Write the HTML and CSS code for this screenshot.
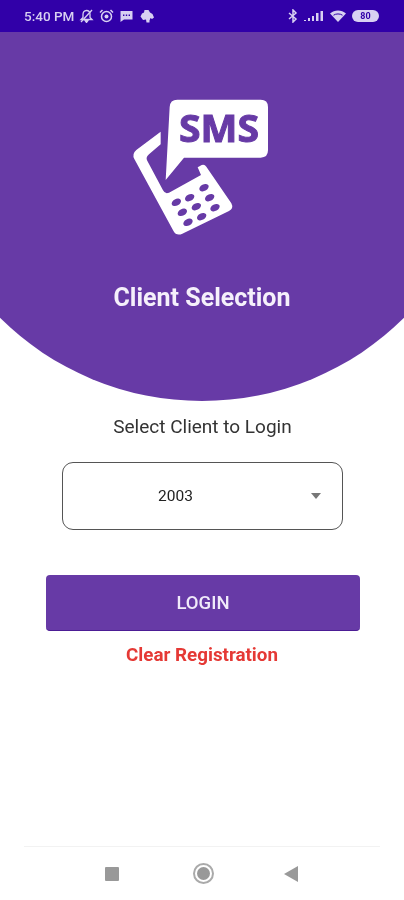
FILE: index.html
```html
<!DOCTYPE html>
<html lang="en">
<head>
    <meta charset="UTF-8">
    <meta name="viewport" content="width=device-width, initial-scale=1.0">
    <title>Client Selection</title>
    <link rel="stylesheet" href="styles.css">
</head>
<body>
    <div class="status-bar">
        <div class="status-left">
            <span class="status-time">5:40 PM</span>
            <svg class="status-icon" width="15" height="14" viewBox="0 0 15 14">
                <path d="M7.500 1.500c2.500 0 3.500 2 3.500 4v3l2 2H2l2-2v-3c0-2 1-4 3.500-4zM6 11.500h3L7.500 13.500z" fill="none" stroke="currentColor" stroke-width="1.300"/>
                <path d="M2 13L13 1" stroke="currentColor" stroke-width="1.300"/>
            </svg>
            <svg class="status-icon" width="15" height="14" viewBox="0 0 15 14">
                <circle cx="7.500" cy="7.500" r="5" fill="none" stroke="currentColor" stroke-width="1.500"/>
                <circle cx="7.500" cy="7.500" r="2" fill="currentColor"/>
                <path d="M1 3.500L3.500 1M14 3.500L11.500 1" stroke="currentColor" stroke-width="1.500"/>
            </svg>
            <svg class="status-icon" width="15" height="14" viewBox="0 0 15 14">
                <path d="M1.500 2h12v8.500H5L1.500 13z" fill="currentColor"/>
                <path d="M4 6.200h7" stroke="#3100a8" stroke-width="1.400" stroke-dasharray="1.400 1.400"/>
            </svg>
            <svg class="status-icon" width="16" height="14" viewBox="0 0 16 14">
                <path d="M5.500 1h4l1.500 2.500 2.500 1.500 1.500 3.500-2 1.500-1.500-1-1 2.500V13.500H7.500l-.5-3-3 .5L1.500 7.500 3 4.500 5 3.500z" fill="currentColor"/>
            </svg>
        </div>
        <div class="status-right">
            <svg class="status-icon" width="10" height="14" viewBox="0 0 10 14">
                <path d="M1 4l7 6-3 3V1l3 3-7 6" fill="none" stroke="currentColor" stroke-width="1.500"/>
            </svg>
            <svg class="status-icon" width="21" height="12" viewBox="0 0 21 12">
                <path d="M1 10h2v1H1zM5 8h2v3H5zM9 6h2v5H9zM13 3h2.500v8H13zM17.500 1H20v10h-2.500z" fill="currentColor"/>
            </svg>
            <svg class="status-icon" width="18" height="14" viewBox="0 0 18 14">
                <path d="M1 4.500C5.500.5 12.500.5 17 4.500L9 13z" fill="currentColor"/>
                <path d="M4.500 6.200c2.500-1.700 6.500-1.700 9 0" fill="none" stroke="#3100a8" stroke-width="1"/>
            </svg>
            <span class="battery">80</span>
        </div>
    </div>

    <div class="hero">
        <svg class="hero-icon" width="170" height="165" viewBox="0 0 510 495">
            <!-- phone body, screen is cut out of the upper half -->
            <path fill="#fff" d="M125 140L52 195Q38 207 46 222L163 437Q172 454 190 446L330 378Q345 370 337 355L262 245Q255 235 243 243L236 247L246 270L150 323Q138 328 132 316L84 226Q80 216 90 208L125 178Z"/>
            <g class="keys">
                <ellipse cx="255" cy="308" rx="15" ry="10" transform="rotate(-28 255 308)"/>
                <ellipse cx="212" cy="338" rx="15" ry="10" transform="rotate(-28 212 338)"/>
                <ellipse cx="172" cy="352" rx="15" ry="10" transform="rotate(-28 172 352)"/>
                <ellipse cx="272" cy="338" rx="15" ry="10" transform="rotate(-28 272 338)"/>
                <ellipse cx="232" cy="365" rx="15" ry="10" transform="rotate(-28 232 365)"/>
                <ellipse cx="190" cy="382" rx="15" ry="10" transform="rotate(-28 190 382)"/>
                <ellipse cx="288" cy="368" rx="15" ry="10" transform="rotate(-28 288 368)"/>
                <ellipse cx="248" cy="395" rx="15" ry="10" transform="rotate(-28 248 395)"/>
                <ellipse cx="207" cy="412" rx="15" ry="10" transform="rotate(-28 207 412)"/>
            </g>
            <!-- speech bubble -->
            <path fill="#fff" d="M175 44H425Q447 44 447 66V196Q447 218 425 218H195L140 285L152 66Q153 44 175 44Z"/>
            <text class="sms-text" x="300" y="170" textLength="240" lengthAdjust="spacingAndGlyphs">SMS</text>
        </svg>
        <h1 class="hero-title">Client Selection</h1>
    </div>

    <div class="content">
        <p class="select-label">Select Client to Login</p>
        <div class="client-select">
            <span class="client-value">2003</span>
            <span class="client-arrow"></span>
        </div>
        <button class="login-button">LOGIN</button>
        <a class="clear-link">Clear Registration</a>
    </div>

    <div class="nav-bar">
        <span class="nav-square"></span>
        <span class="nav-home"><span class="nav-home-dot"></span></span>
        <svg class="nav-back" width="14" height="16" viewBox="0 0 14 16">
            <path d="M0 8L14 0V16z" fill="#999"/>
        </svg>
    </div>
</body>
</html>
```

FILE: styles.css
```css
:root {
    --status-bg: #3100a8;
    --primary: #673aa6;
    --status-text: #d8d0f2;
}

body, html {
    margin: 0;
    padding: 0;
    height: 900px;
    overflow: hidden;
    background-color: #ffffff;
    font-family: Roboto, sans-serif;
}

body {
    display: flex;
    flex-direction: column;
    /* the reference is a soft, upscaled capture */
    filter: blur(0.4px);
}

.status-bar {
    height: 32px;
    flex-shrink: 0;
    box-sizing: border-box;
    padding: 0 25px 0 24px;
    display: flex;
    align-items: center;
    justify-content: space-between;
    background-color: var(--status-bg);
    color: var(--status-text);
}

.status-left, .status-right {
    display: flex;
    align-items: center;
    gap: 5px;
}

.status-time {
    font-size: 13.5px;
    font-weight: 500;
}

.status-icon {
    display: block;
}

.battery {
    width: 27px;
    height: 12px;
    border-radius: 6px;
    background-color: var(--status-text);
    color: var(--status-bg);
    font-size: 9px;
    font-weight: 700;
    line-height: 12px;
    text-align: center;
}

.hero {
    height: 369px;
    flex-shrink: 0;
    display: flex;
    flex-direction: column;
    align-items: center;
    box-sizing: border-box;
    padding-top: 53px;
    background-color: var(--primary);
    clip-path: circle(287px at 202px 82px);
}

.hero-icon {
    display: block;
    margin-left: 3px;
}

.keys {
    fill: var(--primary);
}

.sms-text {
    fill: var(--primary);
    stroke: var(--primary);
    stroke-width: 3px;
    font-family: "Noto Sans", sans-serif;
    font-size: 114px;
    font-weight: 700;
    text-anchor: middle;
}

.hero-title {
    margin: 33px 0 0;
    color: #f5f0fb;
    font-size: 25px;
    font-weight: 700;
    line-height: 30px;
}

.content {
    display: flex;
    flex-direction: column;
    align-items: center;
}

.select-label {
    margin: 15px 0 0 1px;
    color: #333333;
    font-size: 19px;
    line-height: 22px;
}

.client-select {
    width: 281px;
    height: 68px;
    margin-top: 24px;
    box-sizing: border-box;
    display: flex;
    align-items: center;
    border: 1px solid #555555;
    border-radius: 11px;
}

.client-value {
    width: 226px;
    text-align: center;
    color: #222222;
    font-size: 15.5px;
}

.client-arrow {
    margin-left: 22px;
    width: 0;
    height: 0;
    border-left: 5.5px solid transparent;
    border-right: 5.5px solid transparent;
    border-top: 6px solid #777777;
}

.login-button {
    width: 314px;
    height: 56px;
    margin: 45px 0 0 2px;
    border: none;
    border-bottom: 1px solid #4c1d95;
    border-radius: 4px;
    background-color: var(--primary);
    color: #f0eafa;
    font-family: Roboto, sans-serif;
    font-size: 18.5px;
    font-weight: 500;
}

.clear-link {
    margin-top: 13px;
    color: #e53935;
    font-size: 18.8px;
    font-weight: 700;
    line-height: 22px;
}

.nav-bar {
    margin: auto 24px 0;
    height: 54px;
    box-sizing: border-box;
    padding: 0 82px 0 81px;
    display: flex;
    align-items: center;
    justify-content: space-between;
    border-top: 1px solid #f2f2f2;
}

.nav-square {
    width: 14px;
    height: 14px;
    border-radius: 1px;
    background-color: #999999;
}

.nav-home {
    width: 21px;
    height: 21px;
    margin-left: 3px;
    box-sizing: border-box;
    border: 2px solid #aaaaaa;
    border-radius: 50%;
    display: flex;
    align-items: center;
    justify-content: center;
}

.nav-home-dot {
    width: 13px;
    height: 13px;
    border-radius: 50%;
    background-color: #999999;
}
```
